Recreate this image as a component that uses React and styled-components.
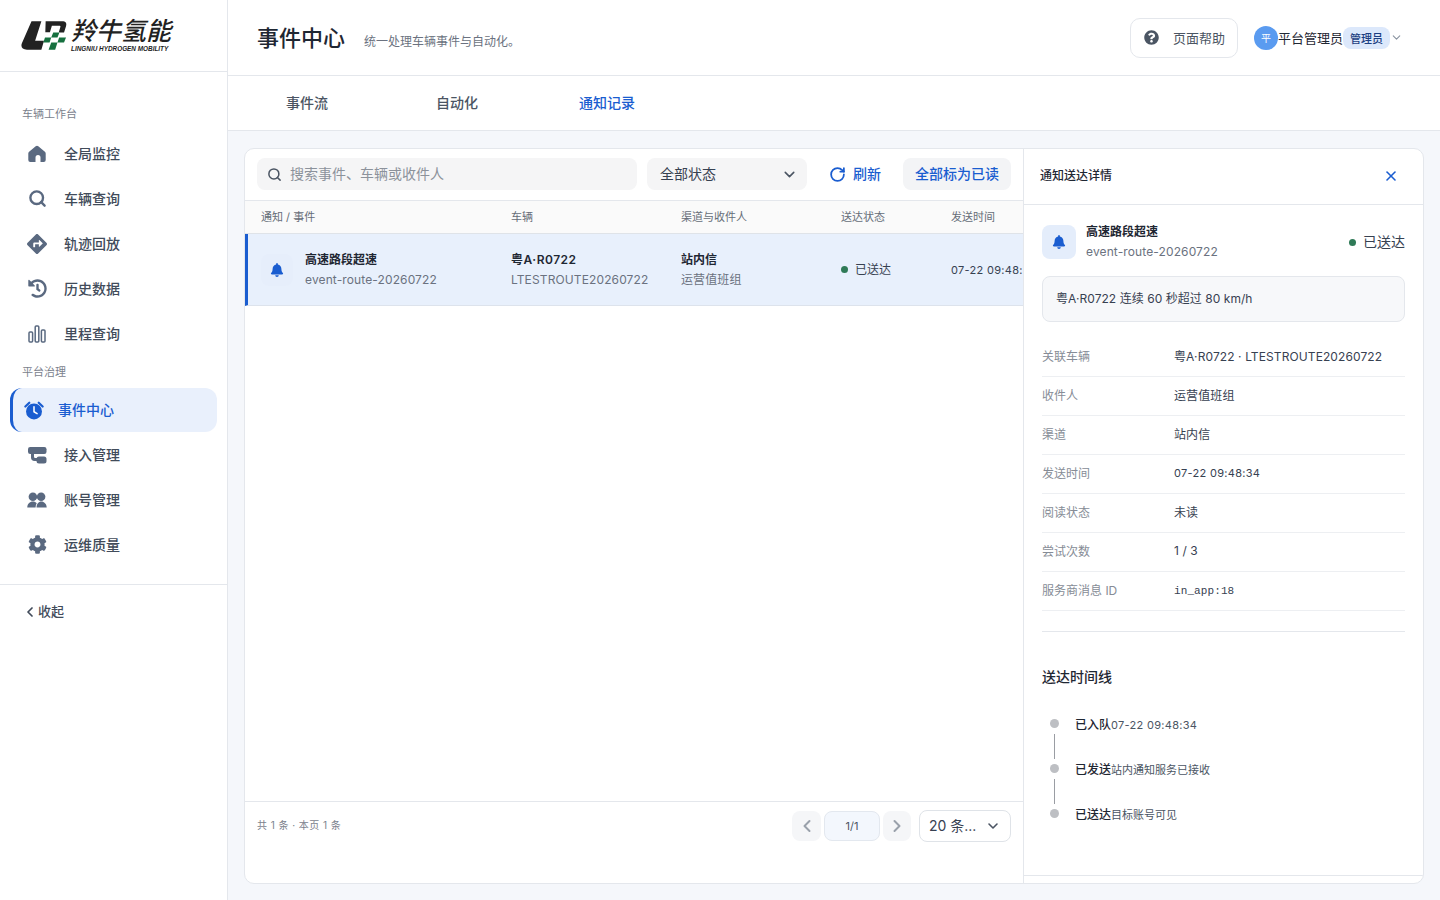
import React from "react";
import styled, { createGlobalStyle } from "styled-components";
import { ChevronDown, ChevronLeft, ChevronRight, RotateCw, Search, X } from "lucide-react";
import { FaBell, FaCog, FaDirections, FaHistory, FaQuestionCircle } from "react-icons/fa";

const Global = createGlobalStyle`
  html, body { margin: 0; padding: 0; background: #fff; }
  * { box-sizing: border-box; }
  body { font-family: Inter, "Noto Sans CJK SC", "Noto Sans", sans-serif; color: #1f2937; }
`;

const COLS = "250px 170px 160px 110px 1fr";
const BLUE = "#1a5dd0";
const LINE = "#e4e7ec";

const Page = styled.div`width: 1440px; height: 900px; display: flex; overflow: hidden; background: #f5f7fb;`;
const Sidebar = styled.aside`width: 228px; flex: none; background: #fff; border-right: 1px solid ${LINE}; display: flex; flex-direction: column;`;
const LogoBar = styled.div`height: 72px; flex: none; border-bottom: 1px solid ${LINE}; padding: 20px 0 0 21px; display: flex; gap: 4px; align-items: flex-start;`;
const LogoText = styled.div`display: flex; flex-direction: column; margin-top: -3px; font-style: italic; color: #222;`;
const LogoCn = styled.span`font-size: 25px; line-height: 28px; font-weight: 500; white-space: nowrap;`;
const LogoEn = styled.span`font-family: "Liberation Sans", sans-serif; font-size: 6.4px; line-height: 7px; font-weight: 700; white-space: nowrap;`;
const Nav = styled.nav`padding: 34px 10px 0; display: flex; flex-direction: column;`;
const SectionLabel = styled.div`font-size: 11px; line-height: 16px; color: #7b828d; padding: ${p => p.$top}px 0 0 12px; height: ${p => p.$h}px;`;
const Item = styled.div`
  height: ${p => (p.$active ? 44 : 45)}px; width: 207px; display: flex; align-items: center;
  gap: ${p => (p.$active ? 14 : 17)}px; font-size: 14px; font-weight: 500;
  padding-left: ${p => (p.$active ? 11 : 17)}px;
  color: ${p => (p.$active ? BLUE : "#414b5a")};
  background: ${p => (p.$active ? "#e9f0fc" : "transparent")};
  border-left: ${p => (p.$active ? `3px solid ${BLUE}` : "none")};
  border-radius: ${p => (p.$active ? "12px" : "0")};
`;
const NavText = styled.span`padding-bottom: 2px;`;
const NavIcon = styled.span`width: 20px; height: 20px; display: flex; align-items: center; justify-content: center; color: ${p => (p.$active ? BLUE : "#5a6980")}; flex: none;`;
const Collapse = styled.div`margin-top: 17px; border-top: 1px solid ${LINE}; padding: 17px 0 0 22px; height: 60px; display: flex; align-items: flex-start; font-size: 13px; font-weight: 500; color: #414b5a; line-height: 18px; svg { margin-top: 2px; }`;

const Main = styled.main`flex: 1; min-width: 0; display: flex; flex-direction: column;`;
const Topbar = styled.header`height: 76px; flex: none; background: #fff; border-bottom: 1px solid ${LINE}; padding: 0 37px 0 29px; display: flex; align-items: center;`;
const Title = styled.h1`margin: 0; font-size: 22px; font-weight: 500; line-height: 30px; color: #1f2733;`;
const Subtitle = styled.span`margin: 6px 0 0 19px; font-size: 12px; color: #6b7280; flex: 1;`;
const HelpBtn = styled.div`width: 108px; height: 40px; border: 1px solid ${LINE}; border-radius: 10px; display: flex; align-items: center; padding-left: 13px; gap: 14px; font-size: 13px; color: #4b5563; margin-right: 16px;`;
const Avatar = styled.span`width: 24px; height: 24px; border-radius: 50%; background: #5a9bf0; color: #fff; font-size: 10px; display: flex; align-items: center; justify-content: center;`;
const UserName = styled.span`font-size: 13px; color: #1f2733; width: 65px; white-space: nowrap;`;
const RoleBadge = styled.span`height: 22px; padding: 0 7px; border-radius: 8px; background: #dce8fb; color: #1c3f82; font-size: 11px; font-weight: 500; display: flex; align-items: center;`;
const User = styled.div`display: flex; align-items: center; color: #8a93a0;`;

const Tabs = styled.div`height: 55px; flex: none; background: #fff; border-bottom: 1px solid ${LINE}; padding: 0 0 0 4px; display: flex;`;
const Tab = styled.div`width: 150px; display: flex; align-items: center; justify-content: center; font-size: 14px; font-weight: 500; padding-bottom: 2px; color: ${p => (p.$active ? BLUE : "#4b5563")};`;

const Content = styled.div`flex: 1; min-height: 0; padding: 17px 16px;`;
const Card = styled.section`height: 736px; background: #fff; border: 1px solid ${LINE}; border-radius: 10px; display: flex; overflow: hidden;`;
const ListPane = styled.div`width: 778px; flex: none; display: flex; flex-direction: column; min-width: 0; overflow: hidden;`;
const Toolbar = styled.div`height: 52px; flex: none; border-bottom: 1px solid ${LINE}; padding: 9px 12px 0 12px; display: flex; gap: 10px;`;
const SearchBox = styled.div`width: 380px; flex: none; height: 32px; border-radius: 8px; background: #f5f5f6; display: flex; align-items: center; padding: 0 0 3px 10px; gap: 8px; font-size: 14px; color: #8c929b; svg { margin-top: 3px; }`;
const SelectBox = styled.div`width: 160px; flex: none; height: 32px; border-radius: 8px; background: #f5f5f6; display: flex; align-items: center; justify-content: space-between; padding: 0 9px 3px 13px; font-size: 14px; color: #374151; svg { margin-top: 3px; }`;
const Refresh = styled.div`height: 32px; width: 52px; flex: none; margin-left: 12px; display: flex; align-items: center; gap: 7px; color: ${BLUE}; font-size: 14px; font-weight: 500; white-space: nowrap; padding-bottom: 3px; svg { margin-top: 3px; }`;
const MarkRead = styled.div`height: 32px; width: 108px; flex: none; margin-left: 12px; border-radius: 8px; background: #f3f4f6; color: ${BLUE}; font-size: 14px; font-weight: 500; display: flex; align-items: center; justify-content: center; padding-bottom: 3px;`;
const HeadRow = styled.div`height: 33px; flex: none; display: grid; grid-template-columns: ${COLS}; padding: 0 0 3px 16px; align-items: center; background: #fafafa; border-bottom: 1px solid #dfe3e8; font-size: 11px; color: #666d78;`;
const DataRow = styled.div`height: 72px; flex: none; display: grid; grid-template-columns: ${COLS}; padding-left: 13px; align-items: center; background: #e8f0fc; border-left: 3px solid ${BLUE}; border-bottom: 1px solid #dde3ec; white-space: nowrap;`;
const EventCell = styled.div`display: flex; align-items: center; gap: 12px;`;
const IconBox = styled.span`width: ${p => p.$size}px; height: ${p => p.$size}px; flex: none; border-radius: 8px; background: ${p => p.$bg}; color: ${BLUE}; display: flex; align-items: center; justify-content: center; font-size: 15px;`;
const Stack = styled.div`display: flex; flex-direction: column; gap: 4px;`;
const Strong = styled.div`font-size: 12px; line-height: 16px; font-weight: 600; color: #1f2733; letter-spacing: ${p => p.$ls || 0}px;`;
const Muted = styled.div`font-size: 12px; line-height: 16px; color: #6b7280; letter-spacing: .12px;`;
const Status = styled.div`display: flex; align-items: center; gap: ${p => p.$gap}px; padding-bottom: ${p => p.$pb}px; font-size: ${p => p.$size}px; color: #374151;`;
const Dot = styled.span`width: 7px; height: 7px; border-radius: 50%; background: #2f7a57; margin-top: ${p => p.$pb}px;`;
const TimeCell = styled.div`font-size: 11px; color: #374151; letter-spacing: .3px;`;
const Spacer = styled.div`flex: 1;`;
const Pager = styled.footer`height: 82px; flex: none; border-top: 1px solid ${LINE}; display: flex; align-items: flex-start; padding: 9px 12px 0 12px;`;
const PagerInfo = styled.span`font-size: 10px; line-height: 28px; color: #7b828d; flex: 1; letter-spacing: .45px;`;
const Arrow = styled.span`width: ${p => p.$w}px; height: 30px; border-radius: 8px; background: #f5f6f8; color: #9aa1ab; display: flex; align-items: center; justify-content: center; margin-right: ${p => p.$mr}px;`;
const PageNo = styled.span`width: 56px; height: 30px; border-radius: 8px; background: #f3f7fd; border: 1px solid #e3e8ef; font-size: 11px; color: #4b5563; display: flex; align-items: center; justify-content: center; margin-right: 3px;`;
const SizeSelect = styled.div`width: 92px; height: 32px; margin-top: -1px; border-radius: 8px; border: 1px solid #dfe3e8; display: flex; align-items: center; justify-content: space-between; padding: 0 9px 2px 9px; font-size: 14px; color: #374151; white-space: nowrap; svg { margin-top: 2px; }`;

const Detail = styled.aside`flex: 1; min-width: 0; border-left: 1px solid ${LINE}; display: flex; flex-direction: column;`;
const DetailHead = styled.div`height: 56px; flex: none; border-bottom: 1px solid ${LINE}; display: flex; align-items: center; justify-content: space-between; padding: 0 24px 1px 16px; font-size: 12px; font-weight: 500; line-height: 16px; color: ${BLUE};`;
const DetailTitle = styled.span`color: #1f2733; padding-bottom: 1px;`;
const DetailBody = styled.div`flex: 1; padding: 19px 18px 0 18px; border-bottom: 1px solid ${LINE}; margin-bottom: 7px;`;
const Hero = styled.div`display: flex; align-items: center; gap: 10px;`;
const HeroText = styled(Stack)`flex: 1;`;
const Note = styled.div`margin-top: 16px; height: 46px; background: #f7f8fa; border: 1px solid ${LINE}; border-radius: 8px; padding: 0 13px 3px; font-size: 12px; display: flex; align-items: center; color: #374151; letter-spacing: .05px;`;
const Facts = styled.div`margin-top: 16px; padding-bottom: 20px; border-bottom: 1px solid ${LINE};`;
const Fact = styled.div`height: 39px; border-bottom: 1px solid #edeff2; display: flex; align-items: center; font-size: 12px; color: #374151; padding-bottom: 3px;`;
const FactKey = styled.span`width: 132px; color: #868c96; flex: none;`;
const FactValue = styled.span`letter-spacing: .1px;`;
const Mono = styled.span`font-family: "Liberation Mono", monospace; font-size: 11px;`;
const Num = styled.span`font-size: 11px; letter-spacing: .3px;`;
const SectionTitle = styled.h3`margin: 35px 0 29px; font-size: 14px; line-height: 20px; font-weight: 500; color: #1f2733;`;
const Timeline = styled.div`display: flex; flex-direction: column; padding-left: 8px;`;
const Step = styled.div`display: flex; gap: 16px; height: ${p => (p.$last ? 20 : 45)}px;`;
const Rail = styled.div`width: 9px; display: flex; flex-direction: column; align-items: center; padding-top: 3px;`;
const RailDot = styled.span`width: 9px; height: 9px; border-radius: 50%; background: #bdbfc3; flex: none;`;
const RailLine = styled.span`width: 1px; height: 25px; margin-top: 6px; background: #9a9da3;`;
const StepText = styled.div`font-size: 12px; line-height: 18px; display: flex; white-space: nowrap;`;
const StepStrong = styled.span`font-weight: 500; color: #1f2733;`;
const StepSub = styled.span`font-size: 11px; color: #4b5563; letter-spacing: ${p => (p.$num ? ".3px" : "0")};`;

const LogoMark = () => (
  <svg width="46" height="31" viewBox="60 60 140 92" aria-hidden="true">
    <path fill="#222" d="M92 63h30l-19 59h27l-8 27H78c-14 0-20-8-15-20z" />
    <path fill="#222" fillRule="evenodd" d="M135 63h50c11 0 15 6 12 15l-6 19c-2 0-14 0-16-1l5-17c.5-2-1-3-3-3h-23l-6 20h-14z" />
    <path fill="#16703f" d="M158 97h19l-6 15h-19zM176 112h21l-6 15h-20zM133 112h19l-5 15h-19zM152 127h19l-7 22h-20z" />
  </svg>
);
const Home = () => (
  <svg width="20" height="20" viewBox="0 0 20 20" fill="currentColor">
    <path fillRule="evenodd" d="M8.700 2.200a2 2 0 0 1 2.600 0l6.600 5.600c.5.400.8 1 .8 1.600V16a2 2 0 0 1-2 2h-3.200v-4.500a2.500 2.500 0 0 0-5 0V18H3.300a2 2 0 0 1-2-2V9.400c0-.6.300-1.200.8-1.600z" />
  </svg>
);
const Bars = () => (
  <svg width="20" height="20" viewBox="0 0 20 20" fill="none" stroke="currentColor" strokeWidth="1.5">
    <rect x="2" y="8" width="3.6" height="10" rx="1" />
    <rect x="8.200" y="2" width="3.6" height="16" rx="1" />
    <rect x="14.400" y="6" width="3.6" height="12" rx="1" />
  </svg>
);
const Alarm = () => (
  <svg width="23" height="23" viewBox="0 0 22 22">
    <circle cx="11" cy="12" r="8.800" fill="currentColor" />
    <path d="M11 7v5.400l3.400 2" fill="none" stroke="#fff" strokeWidth="1.700" strokeLinecap="round" strokeLinejoin="round" />
    <path d="M1.500 6.600 5.800 2.400M20.500 6.600l-4.300-4.200" stroke="currentColor" strokeWidth="2.400" strokeLinecap="round" />
  </svg>
);
const Link = () => (
  <svg width="20" height="20" viewBox="0 0 20 20" fill="currentColor">
    <rect x="1" y="2" width="18.500" height="7" rx="2.200" />
    <rect x="9.500" y="11.500" width="10" height="7" rx="2.500" />
    <path d="M4 8h3v3.500c0 .8.4 1.500 1.300 1.500h2v3H7.500C5.300 16 4 14.500 4 12.500z" />
  </svg>
);
const Users = () => (
  <svg width="21" height="20" viewBox="0 0 21 20" fill="currentColor">
    <circle cx="6.200" cy="6.500" r="4.500" />
    <circle cx="14.800" cy="6.500" r="4.500" />
    <path d="M.3 18c0-3.800 2.600-6.300 5.900-6.300 1.600 0 3 .6 4 1.700-.8 1.200-1.200 2.800-1.200 4.600zM10 18c0-3.800 2.200-6.300 5-6.300s5.700 2.500 5.700 6.300z" />
  </svg>
);

const workbench = [
  [<Home />, "全局监控"],
  [<Search size={19} strokeWidth={3} />, "车辆查询"],
  [<FaDirections size={20} />, "轨迹回放"],
  [<FaHistory size={19} />, "历史数据"],
  [<Bars />, "里程查询"],
];
const platform = [
  [<Link />, "接入管理"],
  [<Users />, "账号管理"],
  [<FaCog size={19} />, "运维质量"],
];
const facts = [
  ["关联车辆", "粤A·R0722 · LTESTROUTE20260722"],
  ["收件人", "运营值班组"],
  ["渠道", "站内信"],
  ["发送时间", <Num>07-22 09:48:34</Num>],
  ["阅读状态", "未读"],
  ["尝试次数", "1 / 3"],
  ["服务商消息 ID", <Mono>in_app:18</Mono>],
];
const steps = [
  ["已入队", "07-22 09:48:34", true],
  ["已发送", "站内通知服务已接收", false],
  ["已送达", "目标账号可见", false],
];

export default function App() {
  return (
    <Page>
      <Global />
      <Sidebar>
        <LogoBar>
          <LogoMark />
          <LogoText>
            <LogoCn>羚牛氢能</LogoCn>
            <LogoEn>LINGNIU HYDROGEN MOBILITY</LogoEn>
          </LogoText>
        </LogoBar>
        <Nav>
          <SectionLabel $h={25} $top={0}>车辆工作台</SectionLabel>
          {workbench.map(([icon, label]) => (
            <Item key={label}><NavIcon>{icon}</NavIcon><NavText>{label}</NavText></Item>
          ))}
          <SectionLabel $h={32} $top={8}>平台治理</SectionLabel>
          <Item $active><NavIcon $active><Alarm /></NavIcon><NavText>事件中心</NavText></Item>
          {platform.map(([icon, label]) => (
            <Item key={label}><NavIcon>{icon}</NavIcon><NavText>{label}</NavText></Item>
          ))}
        </Nav>
        <Collapse><ChevronLeft size={16} strokeWidth={2.6} />收起</Collapse>
      </Sidebar>
      <Main>
        <Topbar>
          <Title>事件中心</Title>
          <Subtitle>统一处理车辆事件与自动化。</Subtitle>
          <HelpBtn><FaQuestionCircle size={15} />页面帮助</HelpBtn>
          <User>
            <Avatar>平</Avatar>
            <UserName>平台管理员</UserName>
            <RoleBadge>管理员</RoleBadge>
            <ChevronDown size={13} />
          </User>
        </Topbar>
        <Tabs>
          <Tab>事件流</Tab>
          <Tab>自动化</Tab>
          <Tab $active>通知记录</Tab>
        </Tabs>
        <Content>
          <Card>
            <ListPane>
              <Toolbar>
                <SearchBox><Search size={15} strokeWidth={2.4} color="#4b5563" />搜索事件、车辆或收件人</SearchBox>
                <SelectBox>全部状态<ChevronDown size={17} strokeWidth={2.2} color="#4b5563" /></SelectBox>
                <Refresh><RotateCw size={17} strokeWidth={2.5} />刷新</Refresh>
                <MarkRead>全部标为已读</MarkRead>
              </Toolbar>
              <HeadRow>
                <span>通知 / 事件</span><span>车辆</span><span>渠道与收件人</span><span>送达状态</span><span>发送时间</span>
              </HeadRow>
              <DataRow>
                <EventCell>
                  <IconBox $size={32} $bg="#e6eefb"><FaBell size={14} /></IconBox>
                  <Stack><Strong>高速路段超速</Strong><Muted>event-route-20260722</Muted></Stack>
                </EventCell>
                <Stack><Strong $ls={0.5}>粤A·R0722</Strong><Muted>LTESTROUTE20260722</Muted></Stack>
                <Stack><Strong>站内信</Strong><Muted>运营值班组</Muted></Stack>
                <Status $gap={7} $size={12} $pb={2}><Dot $pb={2} />已送达</Status>
                <TimeCell>07-22 09:48:34</TimeCell>
              </DataRow>
              <Spacer />
              <Pager>
                <PagerInfo>共 1 条 · 本页 1 条</PagerInfo>
                <Arrow $w={29} $mr={3}><ChevronLeft size={20} strokeWidth={2.4} /></Arrow>
                <PageNo>1/1</PageNo>
                <Arrow $w={28} $mr={8}><ChevronRight size={20} strokeWidth={2.4} /></Arrow>
                <SizeSelect>20 条...<ChevronDown size={16} strokeWidth={2.4} color="#4b5563" /></SizeSelect>
              </Pager>
            </ListPane>
            <Detail>
              <DetailHead>
                <DetailTitle>通知送达详情</DetailTitle>
                <X size={16} strokeWidth={2.4} />
              </DetailHead>
              <DetailBody>
                <Hero>
                  <IconBox $size={34} $bg="#e4edfb"><FaBell size={14} /></IconBox>
                  <HeroText><Strong>高速路段超速</Strong><Muted>event-route-20260722</Muted></HeroText>
                  <Status $gap={7} $size={14} $pb={3}><Dot $pb={3} />已送达</Status>
                </Hero>
                <Note>粤A·R0722 连续 60 秒超过 80 km/h</Note>
                <Facts>
                  {facts.map(([k, v]) => (
                    <Fact key={k}><FactKey>{k}</FactKey><FactValue>{v}</FactValue></Fact>
                  ))}
                </Facts>
                <SectionTitle>送达时间线</SectionTitle>
                <Timeline>
                  {steps.map(([a, b, num], i) => (
                    <Step key={a} $last={i === 2}>
                      <Rail><RailDot />{i < 2 && <RailLine />}</Rail>
                      <StepText><StepStrong>{a}</StepStrong><StepSub $num={num}>{b}</StepSub></StepText>
                    </Step>
                  ))}
                </Timeline>
              </DetailBody>
            </Detail>
          </Card>
        </Content>
      </Main>
    </Page>
  );
}
